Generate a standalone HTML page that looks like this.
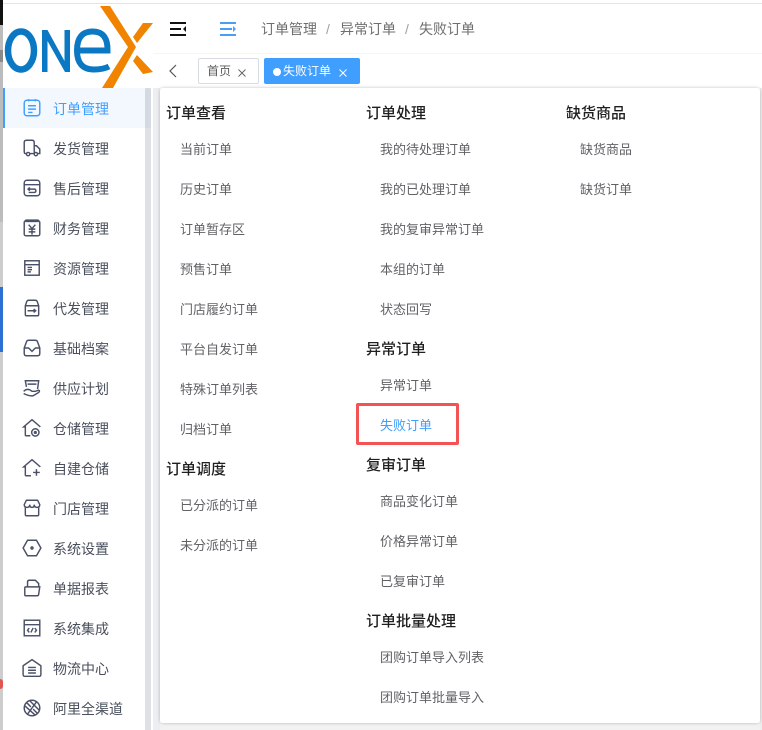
<!DOCTYPE html>
<html><head><meta charset="utf-8">
<style>
*{box-sizing:border-box;margin:0;padding:0}
html,body{width:762px;height:730px;overflow:hidden;background:#fff;font-family:"Liberation Sans","Noto Sans CJK SC",sans-serif}
.a{position:absolute}
.t{position:absolute;white-space:nowrap;line-height:20px;height:20px}
.m{font-size:14px;color:#4a4f5c;left:53px;margin-top:1px}
.h{font-size:15px;color:#1f1f1f;font-weight:500;margin-top:1px}
.s{font-size:13px;color:#606266;margin-top:1px;margin-left:-1px}
svg.i{position:absolute;left:22px;width:20px;height:20px;margin-top:-1px;fill:none;stroke:#4a5068;stroke-width:1.3}
</style></head><body>
<div class="a" style="left:0;top:0;width:3px;height:730px;background:#cdcdcd"></div>
<div class="a" style="left:0;top:25px;width:3px;height:197px;background:#bcbcbc"></div>
<div class="a" style="left:0;top:0;width:3px;height:25px;background:#111"></div>
<div class="a" style="left:0;top:50px;width:3px;height:12px;background:#8a8a8a"></div>
<div class="a" style="left:0;top:287px;width:3px;height:65px;background:#2d6fd2"></div>
<div class="a" style="left:0;top:679px;width:3px;height:10px;background:#e25450;border-radius:0 5px 5px 0"></div>
<div class="a" style="left:3px;top:3px;width:759px;height:1px;background:#e4e4e4"></div>
<div class="a" style="left:153px;top:53px;width:609px;height:1px;background:#f6f6f6"></div>

<!-- logo -->
<svg class="a" style="left:0;top:0" width="156" height="90" viewBox="0 0 156 90">
<ellipse cx="21" cy="50.500" rx="13" ry="19" fill="none" stroke="#0a78c2" stroke-width="6.500"/>
<path fill="#0a78c2" d="M42 30h5.500L64.500 61V30H70V72H65L47.500 41V72H42Z"/>
<path fill="none" stroke="#0a78c2" stroke-width="6" d="M78 50.500H107.500Q108 31.500 92.500 31.500Q77 31.500 77 50.500Q77 69.500 94 69.500Q103 69.500 109 66.500"/>
<path fill="#f08300" d="M100 6H110L136 47L113 88H102L128 47ZM143 23H153L137 43L133 37ZM137 55L153 72L143 74L133 61Z"/>
</svg>

<!-- header icons -->
<svg class="a" style="left:170px;top:21px" width="17" height="16" viewBox="0 0 17 16" fill="#111"><rect x="0" y="1" width="16" height="2"/><rect x="0" y="7" width="11" height="2"/><rect x="0" y="13" width="16" height="2"/><path d="M16 5v6l-3-3z"/></svg>
<svg class="a" style="left:220px;top:21px" width="17" height="16" viewBox="0 0 17 16" fill="#4a9ff5"><rect x="0" y="1" width="16" height="2"/><rect x="0" y="7" width="12" height="2"/><rect x="0" y="13" width="16" height="2"/><path d="M13 5v6l3-3z"/></svg>
<div class="t" style="left:261px;top:19px;font-size:14px;color:#6e6e6e">订单管理</div>
<div class="t" style="left:326px;top:19px;font-size:14px;color:#a0a0a0">/</div>
<div class="t" style="left:340px;top:19px;font-size:14px;color:#6e6e6e">异常订单</div>
<div class="t" style="left:405px;top:19px;font-size:14px;color:#a0a0a0">/</div>
<div class="t" style="left:419px;top:19px;font-size:14px;color:#6e6e6e">失败订单</div>

<!-- tabs -->
<svg class="a" style="left:168px;top:64px" width="10" height="14" viewBox="0 0 10 14" fill="none" stroke="#555" stroke-width="1.200"><path d="M8 1L2 7l6 6"/></svg>
<div class="a" style="left:198px;top:58px;width:61px;height:26px;border:1px solid #d8dce5;border-radius:2px;background:#fff"></div>
<div class="t" style="left:207px;top:61px;font-size:12px;color:#5c5c5c">首页</div>
<svg class="a" style="left:238px;top:69px" width="8" height="8" viewBox="0 0 8 8" stroke="#666" stroke-width="1"><path d="M.5.5l7 7M7.500.5l-7 7"/></svg>
<div class="a" style="left:264px;top:58px;width:96px;height:26px;background:#409eff;border-radius:2px"></div>
<div class="a" style="left:273px;top:68px;width:8px;height:8px;background:#fff;border-radius:50%"></div>
<div class="t" style="left:283px;top:61px;font-size:12px;color:#fff">失败订单</div>
<svg class="a" style="left:339px;top:69px" width="8" height="8" viewBox="0 0 8 8" stroke="#fff" stroke-width="1"><path d="M.5.5l7 7M7.500.5l-7 7"/></svg>

<!-- sidebar -->
<div class="a" style="left:3px;top:88px;width:142px;height:40px;background:#f3f8ff"></div>
<div class="a" style="left:3px;top:88px;width:2px;height:40px;background:#409eff"></div>
<div class="a" style="left:145px;top:88px;width:6px;height:642px;background:#dfe0e3"></div>
<div class="a" style="left:145px;top:88px;width:6px;height:40px;background:#d5d9e2;border-radius:3px 3px 0 0"></div>
<div class="a" style="left:153px;top:88px;width:7px;height:642px;background:#eceef1"></div>
<div class="a" style="left:160px;top:723px;width:602px;height:7px;background:#f2f2f2"></div>
<div class="a" style="left:760px;top:88px;width:2px;height:642px;background:#eeeeee"></div>

<div class="t m" style="top:98px;color:#409eff">订单管理</div>
<div class="t m" style="top:138px">发货管理</div>
<div class="t m" style="top:178px">售后管理</div>
<div class="t m" style="top:218px">财务管理</div>
<div class="t m" style="top:258px">资源管理</div>
<div class="t m" style="top:298px">代发管理</div>
<div class="t m" style="top:338px">基础档案</div>
<div class="t m" style="top:378px">供应计划</div>
<div class="t m" style="top:418px">仓储管理</div>
<div class="t m" style="top:458px">自建仓储</div>
<div class="t m" style="top:498px">门店管理</div>
<div class="t m" style="top:538px">系统设置</div>
<div class="t m" style="top:578px">单据报表</div>
<div class="t m" style="top:618px">系统集成</div>
<div class="t m" style="top:658px">物流中心</div>
<div class="t m" style="top:698px">阿里全渠道</div>

<svg class="i" style="top:99px;stroke:#409eff" viewBox="0 0 18 18"><rect x="2" y="2" width="14" height="14" rx="2.500"/><path d="M6 1v2M12 1v2M5.500 7h7M5.500 10h7M5.500 13h4"/></svg>
<svg class="i" style="top:139px" viewBox="0 0 18 18"><path d="M4 14H3Q2 14 2 12V4Q2 2 4 2H9Q11 2 11 4V14H7M11 7h2l3 3v4h-2"/><circle cx="5.500" cy="14.500" r="1.500"/><circle cx="12.500" cy="14.500" r="1.500"/></svg>
<svg class="i" style="top:179px" viewBox="0 0 18 18"><rect x="2" y="2" width="14" height="14" rx="2.500"/><path d="M2 6h14M7 8.500L5.500 10l1.500 1.500M6 10h5q1.500 0 1.500 1.500T11 13H6"/></svg>
<svg class="i" style="top:219px" viewBox="0 0 18 18"><rect x="2" y="2.500" width="14" height="13.500" rx="1.500"/><path d="M3 2.500h12" stroke-width="2.500"/><path d="M6 6l3 3.500L12 6M6 10h6M6 12.500h6M9 9.500V15"/></svg>
<svg class="i" style="top:259px" viewBox="0 0 18 18"><rect x="2.500" y="2.500" width="13" height="13"/><path d="M2.500 6h13M5 8.500h4M5 10.500h4M5 12.500h3"/></svg>
<svg class="i" style="top:299px" viewBox="0 0 18 18"><path d="M3 7L4 4Q4.500 2 6 2H12Q13.500 2 14 4L15 7V15Q15 16 14 16H4Q3 16 3 15ZM3 7H15M5 11.500h7M10.500 10l1.800 1.500L10.500 13"/></svg>
<svg class="i" style="top:339px" viewBox="0 0 18 18"><path d="M2 9L4 3.500Q4.500 2 6 2H12Q13.500 2 14 3.500L16 9V14Q16 16 14 16H4Q2 16 2 14ZM2 9H6L9 12 12 9H16"/></svg>
<svg class="i" style="top:379px" viewBox="0 0 18 18"><path d="M4 8L3 2.500H15L14 10M5 5.500h8M1.500 12Q5 8.500 9 12H12L15 11Q16.500 11.500 15 13L10 16Q6 16.500 1.500 14"/></svg>
<svg class="i" style="top:419px" viewBox="0 0 18 18"><path d="M3 16V8H1.500L9 1.500 16.500 8M3 16H7.500"/><circle cx="12" cy="13" r="3.300"/><circle cx="12" cy="13" r=".8"/></svg>
<svg class="i" style="top:459px" viewBox="0 0 18 18"><path d="M3 16V8H1.500L9 1.500 16.500 8M3 16H8M10 13h6M13 10v6"/></svg>
<svg class="i" style="top:499px" viewBox="0 0 18 18"><path d="M3 8V15Q3 16 4 16H14Q15 16 15 15V8M2 6L4 2H14L16 6Q16 8.500 13.500 8.500 11 8.500 11 6 11 8.500 9 8.500T7 6Q7 8.500 4.500 8.500 2 8.500 2 6Z"/></svg>
<svg class="i" style="top:539px" viewBox="0 0 18 18"><path d="M5 2H13L17 9 13 16H5L1 9Z"/><circle cx="9" cy="9" r=".9" fill="#4a5068"/></svg>
<svg class="i" style="top:579px" viewBox="0 0 18 18"><path d="M2.500 16V9Q2.500 8 3.500 8H5V3.500Q5 2 6.500 2H12L15 5V8M5 8H16L15 14.500Q15 16 13.500 16H2.500"/></svg>
<svg class="i" style="top:619px" viewBox="0 0 18 18"><rect x="2" y="2" width="14" height="14"/><path d="M2 6h14M6.500 9L5 11l1.500 2M11.500 9L13 11l-1.500 2M10 9L8 13"/></svg>
<svg class="i" style="top:659px" viewBox="0 0 18 18"><path d="M1 7L9 1.500 17 7V15Q17 16.500 15.500 16.500H2.500Q1 16.500 1 15ZM5.500 8.500h7M5.500 11h7M5.500 13.500h7"/></svg>
<svg class="i" style="top:699px" viewBox="0 0 18 18"><circle cx="9" cy="9" r="7"/><path d="M4 4L8 8M14 14L10 10M13 3.500L5 14.500M2.500 7L12 15.500M7 2.500L15.500 11"/></svg>

<!-- panel -->
<div class="a" style="left:160px;top:88px;width:600px;height:635px;background:#fff;border-radius:3px;box-shadow:0 0 3px rgba(0,0,0,.25)"></div>

<div class="t h" style="left:166px;top:103px">订单查看</div>
<div class="t s" style="left:181px;top:139px">当前订单</div>
<div class="t s" style="left:181px;top:179px">历史订单</div>
<div class="t s" style="left:181px;top:219px">订单暂存区</div>
<div class="t s" style="left:181px;top:259px">预售订单</div>
<div class="t s" style="left:181px;top:299px">门店履约订单</div>
<div class="t s" style="left:181px;top:339px">平台自发订单</div>
<div class="t s" style="left:181px;top:379px">特殊订单列表</div>
<div class="t s" style="left:181px;top:419px">归档订单</div>
<div class="t h" style="left:166px;top:459px">订单调度</div>
<div class="t s" style="left:181px;top:495px">已分派的订单</div>
<div class="t s" style="left:181px;top:535px">未分派的订单</div>

<div class="t h" style="left:366px;top:103px">订单处理</div>
<div class="t s" style="left:381px;top:139px">我的待处理订单</div>
<div class="t s" style="left:381px;top:179px">我的已处理订单</div>
<div class="t s" style="left:381px;top:219px">我的复审异常订单</div>
<div class="t s" style="left:381px;top:259px">本组的订单</div>
<div class="t s" style="left:381px;top:299px">状态回写</div>
<div class="t h" style="left:366px;top:339px">异常订单</div>
<div class="t s" style="left:381px;top:375px">异常订单</div>
<div class="t s" style="left:381px;top:415px;color:#409eff">失败订单</div>
<div class="t h" style="left:366px;top:455px">复审订单</div>
<div class="t s" style="left:381px;top:491px">商品变化订单</div>
<div class="t s" style="left:381px;top:531px">价格异常订单</div>
<div class="t s" style="left:381px;top:571px">已复审订单</div>
<div class="t h" style="left:366px;top:611px">订单批量处理</div>
<div class="t s" style="left:381px;top:647px">团购订单导入列表</div>
<div class="t s" style="left:381px;top:687px">团购订单批量导入</div>

<div class="t h" style="left:566px;top:103px">缺货商品</div>
<div class="t s" style="left:581px;top:139px">缺货商品</div>
<div class="t s" style="left:581px;top:179px">缺货订单</div>

<div class="a" style="left:356px;top:403px;width:103px;height:42px;border:3px solid #f45353;border-radius:2px"></div>
</body></html>
